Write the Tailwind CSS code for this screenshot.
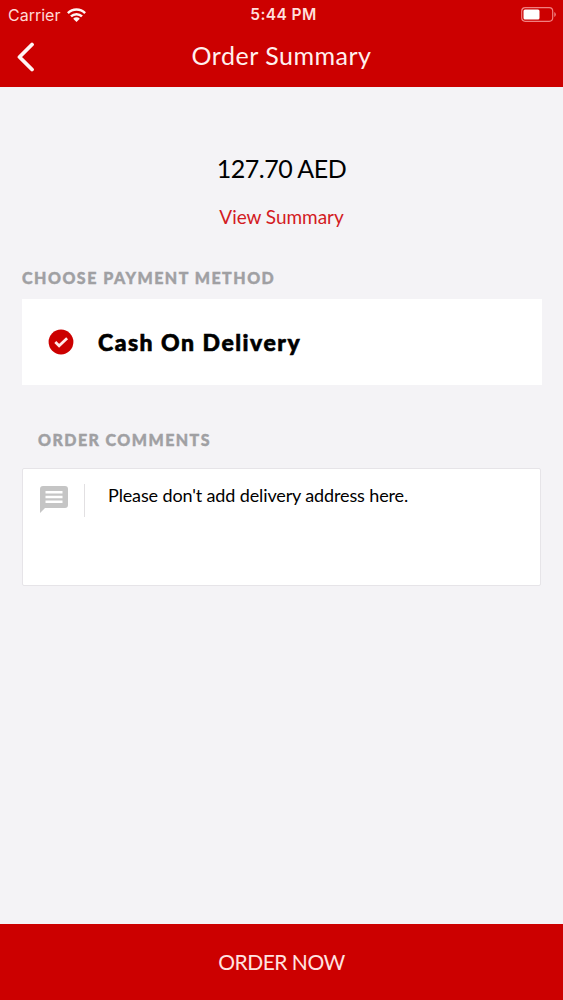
<!DOCTYPE html>
<html lang="en">
<head>
<meta charset="utf-8">
<title>Order Summary</title>
<script src="https://cdn.jsdelivr.net/npm/@tailwindcss/browser@4"></script>
</head>
<body class="w-[563px] h-[1000px] flex flex-col overflow-hidden bg-[#f4f3f6] font-['Lato','Open_Sans',sans-serif] text-black whitespace-nowrap">
<header class="h-[87px] shrink-0 bg-[#cc0000] text-[#fff0ee]">
  <div class="h-7 grid grid-cols-3 items-center pl-2 pr-[7px] font-['Inter',sans-serif]">
    <div class="flex items-center gap-[7px]">
      <span class="text-[16px] leading-7 text-[#ffd9d6]">Carrier</span>
      <svg class="w-[19px] h-[14px]" viewBox="0 0 19 14" fill="none" stroke="#fff5f3" stroke-width="2.5"><path d="M.9 5.1a12.3 12.3 0 0 1 17.2 0M4 8.4a7.8 7.8 0 0 1 11 0"/><path d="M9.500 14 6.200 10.700a4.700 4.700 0 0 1 6.600 0Z" fill="#fff5f3" stroke="none"/></svg>
    </div>
    <span class="pl-[3px] pt-px text-center text-[15.500px] leading-7 font-semibold tracking-[0.4px] text-[#ffdfdc]">5:44 PM</span>
    <svg class="mb-px justify-self-end w-[35px] h-[15px]" viewBox="0 0 35 15"><rect x=".7" y=".7" width="31" height="13.600" rx="3.500" fill="none" stroke="#f08080" stroke-width="1.200"/><rect x="2.500" y="2.500" width="16" height="10" rx="1.500" fill="#fff"/><path d="M33.300 5v5q1.500-.8 1.500-2.500T33.300 5" fill="#f08080"/></svg>
  </div>
  <div class="h-[58px] grid grid-cols-[60px_1fr_60px] items-center">
    <svg class="ml-4 w-5 h-[30px]" viewBox="0 0 20 30" fill="none" stroke="#fff5f3" stroke-width="3.800" stroke-linecap="round" stroke-linejoin="round"><path d="M16 2.500 3.500 15 16 27.500"/></svg>
    <h1 class="pb-[3px] text-center text-[25px] leading-[55px] tracking-[0.5px]">Order Summary</h1>
  </div>
</header>
<main class="flex-1 px-[22px]">
  <div class="pt-[65px] text-center text-[25px] leading-[32px] tracking-[-0.5px]">127.70 AED</div>
  <div class="mt-[18px] text-center text-[19px] leading-[30px] tracking-[-0.05px] text-[#d31b1f]">View Summary</div>
  <h2 class="mt-[36px] text-[16px] leading-[20px] font-black tracking-[1.5px] text-[#a0a0a3] [-webkit-text-stroke:0.4px_#a0a0a3]">CHOOSE PAYMENT METHOD</h2>
  <div class="mt-[11px] h-[86px] w-[520px] bg-white flex items-center pl-[26px] gap-[24px]">
    <svg class="w-[26px] h-[26px]" viewBox="0 0 26 26"><circle cx="13" cy="13" r="12.400" fill="#cc0000"/><path d="m7.300 13 3.800 3.800 8-7.600" fill="none" stroke="#ffe9e8" stroke-width="2.700"/></svg>
    <span class="text-[23px] leading-[30px] font-black tracking-[1.500px] [-webkit-text-stroke:0.6px_#000]">Cash On Delivery</span>
  </div>
  <h2 class="mt-[45px] ml-4 text-[16px] leading-[20px] font-black tracking-[1.450px] text-[#a0a0a3] [-webkit-text-stroke:0.4px_#a0a0a3]">ORDER COMMENTS</h2>
  <div class="mt-[18px] h-[118px] w-[519px] rounded-[2px] border border-[#e6e4e8] bg-white flex items-start">
    <svg class="mt-[17px] ml-[17px] w-[28px] h-[27px]" viewBox="0 0 28 27"><path d="M3 0h22q3 0 3 3v16q0 3-3 3H5l-5 5V3Q0 0 3 0Z" fill="#c5c5c5"/><path d="M5.500 6.300h17M5.500 11h17M5.500 15.700h17" stroke="#fff" stroke-width="2.600"/></svg>
    <div class="mt-[15px] ml-4 w-px h-[33px] bg-[#e2e0e2]"></div>
    <p class="mt-[11px] ml-[23px] text-[18px] leading-[30px] tracking-[-0.13px]">Please don't add delivery address here.</p>
  </div>
</main>
<footer class="h-[76px] shrink-0 bg-[#cc0000] text-[#ffe3e0] text-center text-[21px] leading-[75px] tracking-[-0.5px]">ORDER NOW</footer>
</body>
</html>
